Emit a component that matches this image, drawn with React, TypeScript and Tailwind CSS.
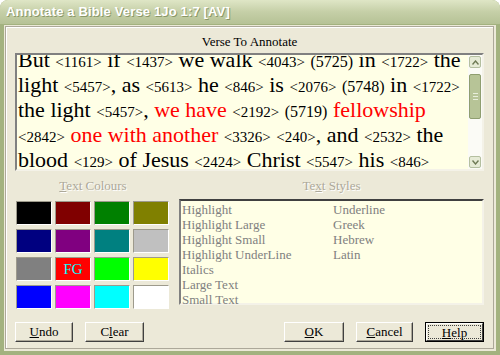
import React from "react";

const N = ({ c }: { c: string }) => <span className="text-[15px] leading-none">&lt;{c}&gt;</span>;
const P = ({ c }: { c: string }) => <span className="text-[16px] leading-none">({c})</span>;
const R = ({ children }: { children: React.ReactNode }) => <span className="text-[#ff0000]">{children}</span>;

const swatches = [
  "bg-[#000000]", "bg-[#800000]", "bg-[#008000]", "bg-[#808000]",
  "bg-[#000080]", "bg-[#800080]", "bg-[#008080]", "bg-[#c0c0c0]",
  "bg-[#808080]", "bg-[#ff0000]", "bg-[#00ff00]", "bg-[#ffff00]",
  "bg-[#0000ff]", "bg-[#ff00ff]", "bg-[#00ffff]", "bg-[#ffffff]",
];

const btn =
  "h-[20px] flex items-center justify-center bg-[#ece9d8] border border-t-white border-l-white border-r-[#404040] border-b-[#404040] shadow-[inset_-1px_-1px_0_#aca899] text-[13px] text-black";

function Arrow({ up }: { up: boolean }) {
  return (
    <div className="h-[12px] w-[12px] bg-[#e6ebd6] border border-[#b4bfa0] rounded-[2px] flex items-center justify-center">
      <svg width="7" height="5" viewBox="0 0 7 5">
        {up ? <path d="M0.5 4.5 L3.5 1 L6.5 4.5" fill="none" stroke="#6e7a55" strokeWidth="1.4" /> : <path d="M0.5 0.5 L3.5 4 L6.5 0.5" fill="none" stroke="#6e7a55" strokeWidth="1.4" />}
      </svg>
    </div>
  );
}

export default function App() {
  return (
    <div className="w-[500px] h-[355px] bg-white">
      <div className="w-[500px] h-[355px] flex flex-col bg-[#a3b27f] rounded-t-[8px] overflow-hidden">
        <div className="h-[25px] shrink-0 flex items-center pl-[6px] bg-gradient-to-b from-[#dfe6c6] via-[#c5cfa7] to-[#b6c296] border-b border-[#a3b27f]">
          <span className="text-[13px] font-bold text-white font-['Liberation_Sans',Arial,sans-serif] [text-shadow:1px_1px_0_#8a9868] tracking-[0.15px]">
            Annotate a Bible Verse 1Jo 1:7 [AV]
          </span>
        </div>
        <div className="flex-1 mx-[4px] mb-[4px] bg-[#ece9d8] flex flex-col pt-[1px] pl-[1px] pr-[2px] pb-[2px]">
          <div className="flex-1 flex flex-col border border-[#aca899] shadow-[inset_1px_1px_0_#fff] px-[9px] font-['Liberation_Serif','Times_New_Roman',serif]">
            <div className="mt-[7px] h-[16px] leading-[16px] text-[13px] text-black text-center">Verse To Annotate</div>
            <div className="mt-[3px] h-[118px] shrink-0 border-2 border-t-[#808080] border-l-[#808080] border-r-[#f4f2e8] border-b-[#f4f2e8] bg-[#ffffe6] flex overflow-hidden">
              <div className="flex-1 overflow-hidden pl-[1px]">
                <div className="-mt-[8px] text-[22px] leading-[25px] text-black whitespace-nowrap">
                  <div>
                    But <N c="1161" /> if <N c="1437" /> we walk <N c="4043" /> <P c="5725" /> in <N c="1722" /> the
                  </div>
                  <div>
                    light <N c="5457" />, as <N c="5613" /> he <N c="846" /> is <N c="2076" /> <P c="5748" /> in <N c="1722" />
                  </div>
                  <div>
                    the light <N c="5457" />, <R>we have</R> <N c="2192" /> <P c="5719" /> <R>fellowship</R>
                  </div>
                  <div>
                    <N c="2842" /> <R>one with another</R> <N c="3326" /> <N c="240" />, and <N c="2532" /> the
                  </div>
                  <div>
                    blood <N c="129" /> of Jesus <N c="2424" /> Christ <N c="5547" /> his <N c="846" />
                  </div>
                </div>
              </div>
              <div className="w-[14px] shrink-0 bg-[#fbfbf6] flex flex-col items-center py-[1px]">
                <Arrow up={true} />
                <div className="mt-[6px] w-[12px] h-[45px] bg-[#b7c497] border border-[#8f9e70] rounded-[2px] flex flex-col items-center justify-center gap-[2px]">
                  <div className="w-[5px] h-[1px] bg-[#e8eedb]" />
                  <div className="w-[5px] h-[1px] bg-[#e8eedb]" />
                  <div className="w-[5px] h-[1px] bg-[#e8eedb]" />
                </div>
                <div className="flex-1" />
                <Arrow up={false} />
              </div>
            </div>
            <div className="flex mt-[7px]">
              <div className="w-[156px] flex flex-col">
                <div className="h-[16px] leading-[16px] text-[13px] text-center text-[#aca899] [text-shadow:1px_1px_0_#fff]">
                  <span className="underline">T</span>ext Colours
                </div>
                <div className="mt-[7px] ml-[1px] grid grid-cols-[repeat(4,36px)] grid-rows-[repeat(4,24px)] gap-x-[3px] gap-y-[4px]">
                  {swatches.map((s, i) => (
                    <div key={i} className={`${s} border border-t-[#9d9a8c] border-l-[#9d9a8c] border-r-white border-b-white flex items-center justify-center`}>
                      {i === 9 && <span className="text-[#00ffff] text-[15px] leading-none">FG</span>}
                    </div>
                  ))}
                </div>
              </div>
              <div className="flex-1 ml-[8px] flex flex-col">
                <div className="h-[16px] leading-[16px] text-[13px] text-center text-[#aca899] [text-shadow:1px_1px_0_#fff]">
                  Te<span className="underline">x</span>t Styles
                </div>
                <div className="mt-[5px] h-[106px] border-2 border-t-[#404040] border-l-[#808080] border-r-[#f4f2e8] border-b-[#f4f2e8] bg-[#ffffe6] flex pl-[1px] pt-[1px] text-[13px] leading-[15px] text-[#808080]">
                  <div className="w-[151px]">
                    <div>Highlight</div>
                    <div>Highlight Large</div>
                    <div>Highlight Small</div>
                    <div>Highlight UnderLine</div>
                    <div>Italics</div>
                    <div>Large Text</div>
                    <div>Small Text</div>
                  </div>
                  <div>
                    <div>Underline</div>
                    <div>Greek</div>
                    <div>Hebrew</div>
                    <div>Latin</div>
                  </div>
                </div>
              </div>
            </div>
            <div className="mt-auto mb-[6px] flex justify-between">
              <div className="flex gap-[12px]">
                <div className={`${btn} w-[58px]`}><span><span className="underline">U</span>ndo</span></div>
                <div className={`${btn} w-[59px]`}><span>C<span className="underline">l</span>ear</span></div>
              </div>
              <div className="flex gap-[12px]">
                <div className={`${btn} w-[60px]`}><span><span className="underline">O</span>K</span></div>
                <div className={`${btn} w-[57px]`}><span><span className="underline">C</span>ancel</span></div>
                <div className="w-[59px] h-[20px] border border-black flex">
                  <div className="flex-1 bg-[#ece9d8] border border-t-white border-l-white border-r-[#404040] border-b-[#404040] p-[1px] flex">
                    <div className="flex-1 border border-dotted border-[#404040] flex items-center justify-center text-[13px] text-black leading-none">
                      <span><span className="underline">H</span>elp</span>
                    </div>
                  </div>
                </div>
              </div>
            </div>
          </div>
        </div>
      </div>
    </div>
  );
}
